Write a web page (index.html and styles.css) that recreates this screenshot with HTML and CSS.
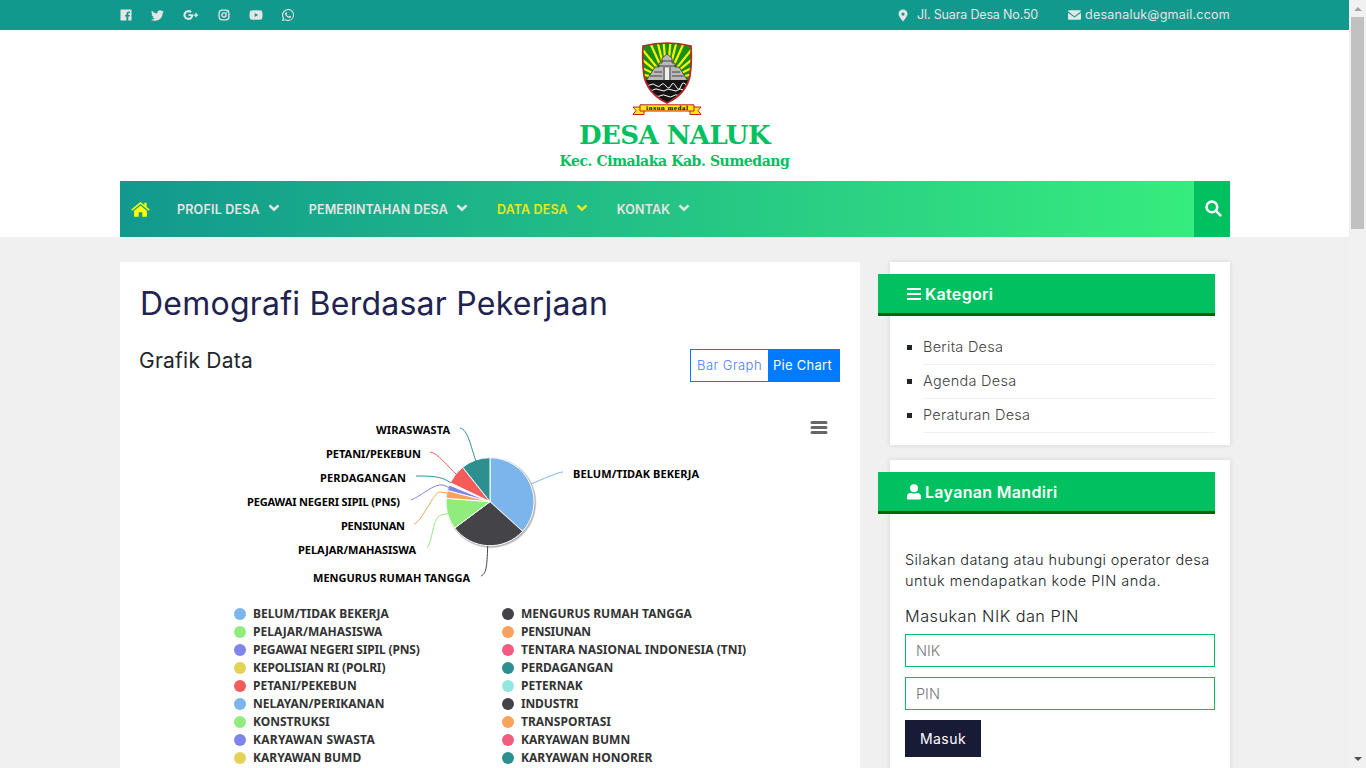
FILE: index.html
```html
<!DOCTYPE html>
<html lang="id">
<head>
<meta charset="utf-8">
<title>Demografi Berdasar Pekerjaan - Desa Naluk</title>
<link rel="stylesheet" href="styles.css">
</head>
<body>
<div class="page">
<div class="topbar"><div class="container topbar-in">
  <div class="social">
    <svg viewBox="0 0 12 12" width="12" height="12"><path fill-rule="evenodd" d="M1 0.5H11Q11.5 .5 11.5 1V11Q11.5 11.5 11 11.5H8.3V7.6H9.7L10 6H8.3V5Q8.3 4.1 9.1 4.1H10V2.6Q6.4 2 6.4 4.8V6H5V7.6H6.4V11.5H1Q.5 11.5 .5 11V1Q.5 .5 1 .5Z"/></svg>
    <svg viewBox="0 0 24 24" width="13" height="13"><path d="M24 4.6a10 10 0 0 1-2.8.8 5 5 0 0 0 2.2-2.7c-1 .5-2 1-3.1 1.2a4.9 4.9 0 0 0-8.4 4.5A14 14 0 0 1 1.700 3.200a4.900 4.900 0 0 0 1.500 6.500 4.900 4.900 0 0 1-2.200-.6v.1a4.900 4.900 0 0 0 3.900 4.800 5 5 0 0 1-2.200.1 4.900 4.900 0 0 0 4.600 3.400A9.900 9.900 0 0 1 0 19.500 14 14 0 0 0 21.500 7c1-.7 1.800-1.500 2.500-2.400z"/></svg>
    <svg viewBox="0 0 16 12" width="16" height="12"><path class="line g" d="M9.300 6A3.900 3.900 0 1 1 8 3.100"/><path d="M5.500 5.200H10.200V7H5.500zM12.300 3.900h1.400v1.500h1.500v1.400h-1.500v1.500h-1.400V6.800h-1.500V5.400h1.500z"/></svg>
    <svg viewBox="0 0 12 12" width="12" height="12"><rect class="line" x="1.100" y="1.100" width="9.800" height="9.800" rx="2.800"/><circle class="line" cx="6" cy="6" r="2.100"/><circle cx="8.900" cy="3.100" r=".8"/></svg>
    <svg viewBox="0 0 14 12" width="14" height="12"><path fill-rule="evenodd" d="M2 1.500Q7 1 12 1.500 13.500 1.700 13.500 6T12 10.500Q7 11 2 10.500 .5 10.300 .5 6T2 1.500ZM5.700 4V8L9.200 6Z"/></svg>
    <svg viewBox="0 0 24 24" width="12" height="12"><path fill-rule="evenodd" d="M20.500 3.500A12 12 0 0 0 1.700 17.900L0 24l6.300-1.600A12 12 0 0 0 20.500 3.500ZM12 21.800a10 10 0 0 1-5-1.400l-3.700 1 1-3.600A9.900 9.900 0 1 1 12 21.800ZM17.500 14.400c-.3-.2-1.800-.9-2-1-.3-.1-.5-.1-.7.200l-.9 1.100c-.2.200-.4.200-.7.100a8 8 0 0 1-4-3.500c-.3-.5.300-.5.900-1.600.1-.2 0-.4 0-.5L9.200 7c-.2-.6-.5-.5-.7-.5-.9-.1-1.300.1-1.600.5-2.500 2.900 1.200 7.100 3.400 8.900 2.300 1.600 4.500 2.200 6.100 1.600.9-.4 1.800-1.100 1.900-2 .1-.9-.1-.7-.8-1.100z"/></svg>
  </div>
  <div class="contact">
    <svg viewBox="0 0 10 13" width="10" height="13"><path fill-rule="evenodd" d="M5 .5A4.500 4.500 0 0 0 .5 5Q.5 7 5 12.500 9.500 7 9.500 5A4.500 4.500 0 0 0 5 .5ZM5 3.500A1.600 1.600 0 1 1 5 6.700 1.600 1.600 0 0 1 5 3.500Z"/></svg>
    <span class="t-addr">Jl. Suara Desa No.50</span>
    <svg class="mail" viewBox="0 0 13 10" width="13" height="10"><path d="M1 .3H12Q13 .3 13 1.300L6.500 6.200 0 1.300Q0 .3 1 .3ZM0 2.700L6.500 7.500 13 2.700V8.800Q13 9.700 12 9.700H1Q0 9.700 0 8.800Z"/></svg>
    <span class="t-mail">desanaluk@gmail.ccom</span>
  </div>
</div></div>
<header class="header"><div class="container">
  <div class="brand">
    <svg class="logo" viewBox="0 0 70 74" width="70" height="74">
      <defs><clipPath id="sh"><path d="M11 4Q35-2 59 4Q60 20 58 34Q54 52 35 61Q16 52 12 34Q10 20 11 4Z"/></clipPath></defs>
      <g clip-path="url(#sh)"><rect width="70" height="74" fill="#159215"/>
      <g stroke="#fff200" stroke-width="2.200"><path d="M35 38L0 30M35 38L0 21M35 38L2 11M35 38L6 2M35 38L15-6M35 38L24-6M35 38L31-6M35 38L39-6M35 38L46-6M35 38L55-6M35 38L64 2M35 38L68 11M35 38L70 21M35 38L70 30"/></g>
      <path d="M30 16L35 12 40 16V21H43V25H47L56 39H14L23 25H27V21H30Z" fill="#b9b9b9" stroke="#333" stroke-width=".8"/>
      <path d="M29 19H41M26 24H44M32 25V38M38 25V38M22 30H30M40 30H48M18 34H30M40 34H52" stroke="#444" stroke-width="1"/><path d="M33 26H37V38H33Z" fill="#eee"/>
      <path d="M8 38H62V64H8Z" fill="#151515"/>
      <path d="M14 43q3 1 5-.5t5 1 5-.5 5 1 5-.5 5 1 5-.5 6 0M17 48q4 1 5-.5t6 .5 6 0 6 0 6 0 6 0M24 54q3 1 5-.5t6 .5 6 0 6-.5" fill="none" stroke="#fff" stroke-width="1"/></g>
      <path d="M11 4Q35-2 59 4Q60 20 58 34Q54 52 35 61Q16 52 12 34Q10 20 11 4Z" fill="none" stroke="#b92525" stroke-width="1.700"/>
      <path d="M8 65H1L4 68.500 1 72.500H12V69M62 65H69L66 68.500 69 72.500H58V69" fill="#ffe714" stroke="#bd2323" stroke-width="1"/><path d="M8 62.800H62V69H8Z" fill="#ffe714" stroke="#bd2323" stroke-width="1"/>
      <text x="14" y="67.800" textLength="42" font-family="DejaVu Serif" font-size="5.500" font-weight="bold">insun medal</text>
    </svg>
    <h1 class="site-name">DESA NALUK</h1>
    <p class="site-sub">Kec. Cimalaka Kab. Sumedang</p>
  </div>
  <nav class="nav">
    <svg class="home" viewBox="0 0 19 15" width="19" height="15"><path d="M9.500 3.400L15.900 8.700V14.200Q15.900 14.800 15.300 14.800H11.300V10.200H7.700V14.800H3.700Q3.100 14.800 3.100 14.200V8.700Z"/><path d="M.7 8.100L9.500 .9 18.300 8.100" fill="none" stroke="#ff0" stroke-width="1.500"/><path d="M13.300.7H15.600V5.500L13.300 3.600Z"/></svg>
    <a class="item i1"><span>PROFIL DESA</span><svg viewBox="0 0 12 8" width="12" height="8"><path d="M1.500 1.400L6 5.700 10.500 1.400"/></svg></a>
    <a class="item i2"><span>PEMERINTAHAN DESA</span><svg viewBox="0 0 12 8" width="12" height="8"><path d="M1.500 1.400L6 5.700 10.500 1.400"/></svg></a>
    <a class="item i3 active"><span>DATA DESA</span><svg viewBox="0 0 12 8" width="12" height="8"><path d="M1.500 1.400L6 5.700 10.500 1.400"/></svg></a>
    <a class="item i4"><span>KONTAK</span><svg viewBox="0 0 12 8" width="12" height="8"><path d="M1.500 1.400L6 5.700 10.500 1.400"/></svg></a>
    <button class="search"><svg viewBox="0 0 17 17" width="17" height="17"><circle cx="6.900" cy="6.900" r="5.300"/><path d="M10.700 10.700L15.400 15.400"/></svg></button>
  </nav>
</div></header>
<div class="container columns">
  <main class="card main">
    <h2 class="title">Demografi Berdasar Pekerjaan</h2>
    <div class="subrow"><h3 class="sub">Grafik Data</h3>
      <div class="btns"><a class="b1">Bar Graph</a><a class="b2">Pie Chart</a></div></div>
    <svg class="chart" viewBox="140 382 700 222" width="700" height="222">
      <g class="burger"><path d="M812 422.500H826M812 427.500H826M812 432.500H826"/></g>
      <g class="shadow"><circle cx="491" cy="502.700" r="45.500" opacity=".1"/><circle cx="491" cy="502.700" r="44.800" opacity=".2"/></g>
      <g id="pie" stroke="#fff" stroke-width="1"></g>
      <g class="conn">
        <path stroke="#7cb5ec" d="M563 472C558 472 541 480 531 484"/>
        <path stroke="#434348" d="M481 576C486 574 487 568 487.700 546"/>
        <path stroke="#90ed7d" d="M427 548C433 541 432 518 441 515 445 514 447 514 448 513.500"/>
        <path stroke="#f7a35c" d="M414 524C422 522 434 491 440 492L447 493"/>
        <path stroke="#8085e9" d="M411 500C420 497 434 483 443 485Q446 486 449 487.500"/>
        <path stroke="#2b908f" d="M416 476C436 476 442 477 451 483"/>
        <path stroke="#f45b5b" d="M430 452C437 452 450 469 456 474"/>
        <path stroke="#2b908f" d="M460 428C468 429 471 448 476 461"/>
      </g>
      <g class="labels">
        <text x="573" y="478" textLength="126">BELUM/TIDAK BEKERJA</text>
        <text x="376" y="434" textLength="74">WIRASWASTA</text>
        <text x="326" y="458" textLength="95">PETANI/PEKEBUN</text>
        <text x="320" y="482" textLength="86">PERDAGANGAN</text>
        <text x="247" y="506" textLength="153">PEGAWAI NEGERI SIPIL (PNS)</text>
        <text x="341" y="530" textLength="64">PENSIUNAN</text>
        <text x="298" y="554" textLength="118">PELAJAR/MAHASISWA</text>
        <text x="313" y="582" textLength="157">MENGURUS RUMAH TANGGA</text>
      </g>
    </svg>
    <ul class="legend">
      <li class="c0"><span>BELUM/TIDAK BEKERJA</span></li><li class="c1"><span>MENGURUS RUMAH TANGGA</span></li>
      <li class="c2"><span>PELAJAR/MAHASISWA</span></li><li class="c3"><span class="tight">PENSIUNAN</span></li>
      <li class="c4"><span class="snug">PEGAWAI NEGERI SIPIL (PNS)</span></li><li class="c5"><span>TENTARA NASIONAL INDONESIA (TNI)</span></li>
      <li class="c6"><span class="snug">KEPOLISIAN RI (POLRI)</span></li><li class="c7"><span>PERDAGANGAN</span></li>
      <li class="c8"><span>PETANI/PEKEBUN</span></li><li class="c9"><span>PETERNAK</span></li>
      <li class="c0"><span>NELAYAN/PERIKANAN</span></li><li class="c1"><span class="snug">INDUSTRI</span></li>
      <li class="c2"><span>KONSTRUKSI</span></li><li class="c3"><span>TRANSPORTASI</span></li>
      <li class="c4"><span class="loose">KARYAWAN SWASTA</span></li><li class="c5"><span>KARYAWAN BUMN</span></li>
      <li class="c6"><span>KARYAWAN BUMD</span></li><li class="c7"><span>KARYAWAN HONORER</span></li>
    </ul>
  </main>
  <aside class="side">
    <section class="card box kat">
      <h4 class="head"><svg viewBox="0 0 14 14" width="14" height="14"><path d="M0 1H14V3H0ZM0 6H14V8H0ZM0 11H14V13H0Z"/></svg><span>Kategori</span></h4>
      <ul class="cats"><li>Berita Desa</li><li>Agenda Desa</li><li>Peraturan Desa</li></ul>
    </section>
    <section class="card box lay">
      <h4 class="head"><svg viewBox="0 0 14 16" width="14" height="16"><circle cx="7" cy="4.200" r="4"/><path d="M0 15.500V12.800Q0 9 3.800 9H4.300Q7 10.200 9.700 9H10.200Q14 9 14 12.800V14.500Q14 15.500 13 15.500H1Q0 15.500 0 14.500Z"/></svg><span>Layanan Mandiri</span></h4>
      <p class="info"><span>Silakan datang atau hubungi operator desa</span><br><span class="wide">untuk mendapatkan kode PIN anda.</span></p>
      <p class="ask">Masukan NIK dan PIN</p>
      <input class="field" placeholder="NIK"><input class="field" placeholder="PIN">
      <button class="submit">Masuk</button>
    </section>
  </aside>
</div>
</div>
<div class="scroll"><i class="up"></i><i class="thumb"></i><i class="down"></i></div>
<script src="chart.js"></script>
</body>
</html>
```
FILE: styles.css
```css
*{box-sizing:border-box}
html,body{margin:0;height:768px;overflow:hidden}
body{display:flex;background:#f0f0f0;font-family:Inter,"Open Sans",sans-serif;font-size:14px;color:#212529}
h1,h2,h3,h4,p,ul{margin:0;padding:0;font-weight:400}
svg{display:block;flex:none}
span{white-space:nowrap}
.page{width:1349px;height:768px;overflow:hidden;flex:none}
.container{width:1110px;margin-left:120px}
.topbar{height:30px;background:#12998d;color:#e5e5e5;font-size:12.500px}
.topbar-in{display:flex;justify-content:space-between;height:30px;align-items:center}
.topbar svg{fill:#e5e5e5}
.topbar .line{fill:none;stroke:#e5e5e5;stroke-width:1.300}
.topbar .g{stroke-width:2.100}
.social{display:flex;align-items:center;gap:19px}
.contact{display:flex;align-items:center;line-height:30px}
.contact span{margin-left:9px}
.contact .mail{margin-left:30px}
.contact .mail+span{margin-left:4px}
.t-addr{letter-spacing:-.16px}
.t-mail{letter-spacing:.23px}
.header{background:#fff;height:207px}
.brand{height:151px;padding-top:12px;display:flex;flex-direction:column;align-items:center;color:#00c060;font-family:"DejaVu Serif",serif}
.logo{margin-left:-17px}
.site-name{font-size:26px;font-weight:700;line-height:38px;letter-spacing:-.54px;margin-left:-1px}
.site-sub{font-size:14px;font-weight:700;line-height:14px;letter-spacing:-.41px;margin-left:-1px}
.nav{height:56px;display:flex;align-items:center;background:linear-gradient(90deg,#11998e,#38ef7d);font-size:12.500px;font-weight:600;color:#e5e5e5}
.home{fill:#ff0;margin:1px 0 0 11px}
.item{display:flex;align-items:center;letter-spacing:.14px}
.item svg{fill:none;stroke:currentColor;stroke-width:2.600;margin:-2px 0 0 8px}
.i1{margin-left:27px;letter-spacing:.2px}
.i2,.i3,.i4{margin-left:29px}
.active{color:#e8e81c}
.search{margin-left:auto;width:36px;height:56px;border:0;padding:0 0 2px 3px;background:#00c060;display:grid;place-items:center}
.search svg{fill:none;stroke:#fff;stroke-width:2.600;stroke-linecap:round}
.columns{display:flex;gap:30px;padding-top:25px}
.card{background:#fff}
.main{width:740px;height:560px;padding:0 20px}
.title{padding-top:19px;line-height:46px;font-size:32px;letter-spacing:.24px;color:#1f2350}
.subrow{display:flex;justify-content:space-between;margin-top:22px;height:33px}
.sub{font-size:21px;line-height:24px;letter-spacing:.24px;margin-left:-1px}
.btns{display:flex;width:150px;border:1px solid #007bff;font-size:13px;line-height:31px}
.b1{width:77px;padding-left:6px;color:#4a7cf5;font-weight:300;letter-spacing:.46px}
.b2{flex:1;padding-left:5px;background:#007bff;color:#fff;letter-spacing:.27px}
.burger{stroke:#666;stroke-width:3;stroke-linecap:round}
.shadow{fill:#000}
.conn{fill:none;stroke-width:1}
.labels{font:700 11px "Noto Sans",sans-serif}
.legend{list-style:none;display:grid;grid-template-columns:268px 260px;margin:1px 0 0 94px;font:700 12px/18px "Noto Sans",sans-serif}
.legend li{display:flex;align-items:center;height:18px}
.legend li::before{content:"";width:12px;height:12px;border-radius:50%;background:currentColor;margin-right:7px}
.legend span{color:#333}
.tight{letter-spacing:-.25px}
.snug{letter-spacing:-.15px}
.loose{letter-spacing:.26px}
.c0{color:#7cb5ec}.c1{color:#434348}.c2{color:#90ed7d}.c3{color:#f7a35c}.c4{color:#8085e9}
.c5{color:#f15c80}.c6{color:#e4d354}.c7{color:#2b908f}.c8{color:#f45b5b}.c9{color:#91e8e1}
.side{width:340px}
.box{padding:12px 15px 0;box-shadow:0 0 5px rgba(0,0,0,.12)}
.kat{height:183px}
.lay{height:400px;margin-top:15px}
.head{display:flex;align-items:center;margin-left:-27px;height:42px;background:#00c060;border-bottom:3px solid #006400;padding-left:29px;color:#fff;font-size:16px;font-weight:600;letter-spacing:.31px}
.head svg{fill:#fff;margin-right:4px}
.cats{list-style:none;margin:15px 0 0 18px;font-size:14.500px;font-weight:300;letter-spacing:.27px;color:#444}
.cats li{height:34px;padding-bottom:2px;border-bottom:1px solid #f0f0f0;display:flex;align-items:center}
.cats li::before{content:"";width:5px;height:5px;background:#212529;margin:1px 11px 0 -16px}
.info{margin-top:35px;line-height:21px;font-size:14.500px;font-weight:300;letter-spacing:.4px}
.wide{letter-spacing:.51px}
.ask{margin-top:13px;line-height:24px;font-size:16.300px;font-weight:300;letter-spacing:.47px}
.field{display:block;width:310px;height:33px;border:1px solid #00c060;padding:0 10px 1px;font:300 14.500px Inter,sans-serif;margin:6px 0 10px}
.field+.field{margin-top:0}
.field::placeholder{color:#777}
.submit{width:76px;height:37px;border:0;padding:0;background:#181b36;color:#fff;font:400 14px Inter,sans-serif;letter-spacing:.43px}
.scroll{width:17px;height:768px;background:#f1f1f1;display:flex;flex-direction:column;align-items:center}
.up{border:4px solid transparent;border-top:0;border-bottom:4px solid #a3a3a3;margin-top:7px}
.thumb{width:13px;height:212px;background:#c1c1c1;margin-top:6px}
.down{border:4px solid transparent;border-bottom:0;border-top:4px solid #505050;margin-top:auto;margin-bottom:7px}
```
FILE: chart.js
```js
// Slices: start angle, end angle (degrees clockwise from the top), fill
const slices = [
  [0, 132.2, '#7cb5ec'], [132.2, 233.3, '#434348'], [233.3, 274.5, '#90ed7d'],
  [274.5, 284.8, '#f7a35c'], [284.8, 292.5, '#8085e9'], [292.5, 295.5, '#f5f5f5'],
  [295.5, 321.6, '#f45b5b'], [321.6, 360, '#2b908f']
];
const pt = a => {
  const r = a * Math.PI / 180;
  return (490 + 44 * Math.sin(r)).toFixed(2) + ' ' + (501.7 - 44 * Math.cos(r)).toFixed(2);
};
document.getElementById('pie').innerHTML = slices.map(([a, b, c]) =>
  `<path fill="${c}" d="M490 501.7L${pt(a)}A44 44 0 0 1 ${pt(b)}Z"/>`).join('');
```
